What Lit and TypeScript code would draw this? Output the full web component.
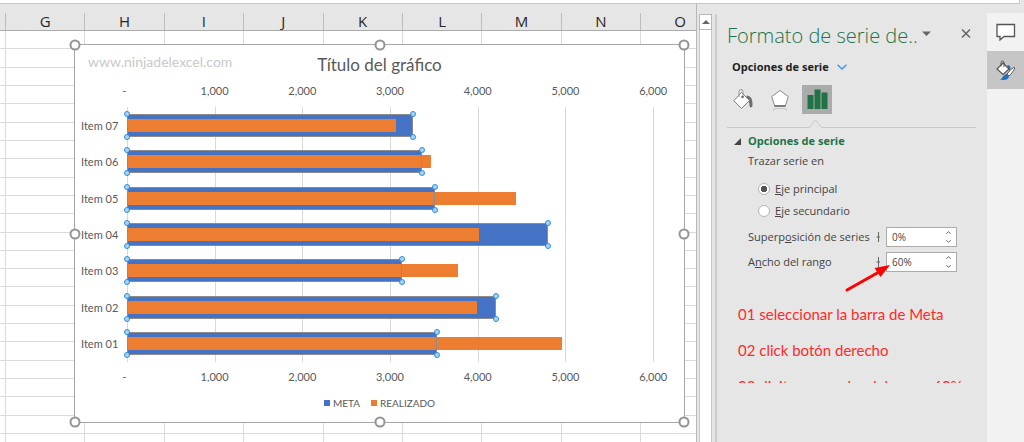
import { LitElement, html, css, svg } from "lit";
import { customElement, property } from "lit/decorators.js";

interface Row {
  label: string;
  meta: number;
  real: number;
}

const AXIS_MAX = 6000;
const TICKS = ["-", "1,000", "2,000", "3,000", "4,000", "5,000", "6,000"];
const ROWS: Row[] = [
  { label: "Item 07", meta: 3256, real: 3065 },
  { label: "Item 06", meta: 3355, real: 3458 },
  { label: "Item 05", meta: 3505, real: 4432 },
  { label: "Item 04", meta: 4797, real: 4005 },
  { label: "Item 03", meta: 3127, real: 3765 },
  { label: "Item 02", meta: 4199, real: 3982 },
  { label: "Item 01", meta: 3532, real: 4951 },
];
const COLUMNS = ["G", "H", "I", "J", "K", "L", "M", "N", "O"];
const pct = (v: number) => `width:${(v / AXIS_MAX) * 100}%`;

@customElement("bar-chart")
class BarChart extends LitElement {
  static styles = css`
    :host {
      display: flex;
      flex-direction: column;
      position: relative;
      box-sizing: border-box;
      background: #fff;
      border: 1px solid #a6a6a6;
      font-family: Lato, "Liberation Sans", sans-serif;
      font-size: 11px;
      color: #595959;
    }
    .head {
      display: grid;
      height: 36px;
    }
    .head > * {
      grid-area: 1 / 1;
      margin: 0;
      white-space: nowrap;
    }
    .mark {
      padding: 8px 0 0 13px;
      font-size: 14px;
      line-height: 18px;
      color: #c9c9c9;
    }
    .title {
      padding-top: 8px;
      text-align: center;
      font-weight: 400;
      font-size: 17px;
      line-height: 24px;
    }
    .axis {
      display: grid;
      grid-template-columns: repeat(7, 1fr);
      margin: 0 -13px 0 8px;
      text-align: center;
      line-height: 20px;
    }
    .axis span:first-child {
      padding-right: 5px;
    }
    .plot {
      flex: 1;
      display: grid;
      grid-template-columns: 52px 1fr;
      margin: 6px 30px 5px 0;
    }
    .labels,
    .bars {
      display: grid;
      grid-template-rows: repeat(7, 1fr);
    }
    .labels span {
      align-self: center;
      padding-left: 6px;
      white-space: nowrap;
    }
    .area,
    .cell {
      display: grid;
    }
    .area > *,
    .cell > * {
      grid-area: 1 / 1;
    }
    .lines {
      display: grid;
      grid-template-columns: repeat(6, 1fr);
      border-left: 1px solid #d9d9d9;
    }
    .lines i {
      border-right: 1px solid #d9d9d9;
    }
    .cell {
      align-items: center;
    }
    .meta,
    .outline {
      height: 23px;
      box-sizing: border-box;
    }
    .meta {
      background: #4472c4;
    }
    .real {
      height: 13px;
      background: #ed7d31;
    }
    .outline {
      position: relative;
      border: 1px solid #8c8c8c;
    }
    .dot {
      position: absolute;
      width: 4px;
      height: 4px;
      border: 1px solid #2f8fdc;
      border-radius: 50%;
      background: #a9d3f5;
    }
    .tl { left: -4px; top: -4px; }
    .tr { right: -4px; top: -4px; }
    .bl { left: -4px; bottom: -4px; }
    .br { right: -4px; bottom: -4px; }
    .legend {
      display: flex;
      justify-content: center;
      gap: 11px;
      padding: 8px 0 11px;
      font-size: 10px;
      line-height: 16px;
    }
    .key {
      display: flex;
      align-items: center;
      gap: 3px;
    }
    .key::before {
      content: "";
      width: 6px;
      height: 6px;
      background: #4472c4;
    }
    .key.orange::before {
      background: #ed7d31;
    }
    .grip {
      position: absolute;
      width: 7px;
      height: 7px;
      border: 2px solid #949494;
      border-radius: 50%;
      background: #fff;
      transform: translate(-50%, -50%);
    }
    .x0 { left: 0; }
    .x1 { left: 50%; }
    .x2 { left: 100%; }
    .y0 { top: 0; }
    .y1 { top: 50%; }
    .y2 { top: 100%; }
  `;

  render() {
    const axis = html`<div class="axis">${TICKS.map((t) => html`<span>${t}</span>`)}</div>`;
    return html`
      <div class="head">
        <span class="mark">www.ninjadelexcel.com</span>
        <h2 class="title">Título del gráfico</h2>
      </div>
      ${axis}
      <div class="plot">
        <div class="labels">${ROWS.map((r) => html`<span>${r.label}</span>`)}</div>
        <div class="area">
          <div class="lines">${TICKS.slice(1).map(() => html`<i></i>`)}</div>
          <div class="bars">
            ${ROWS.map(
              (r) => html`<div class="cell">
                <div class="meta" style=${pct(r.meta)}></div>
                <div class="real" style=${pct(r.real)}></div>
                <div class="outline" style=${pct(r.meta)}>
                  <i class="dot tl"></i><i class="dot tr"></i><i class="dot bl"></i><i class="dot br"></i>
                </div>
              </div>`
            )}
          </div>
        </div>
      </div>
      ${axis}
      <div class="legend">
        <span class="key">META</span><span class="key orange">REALIZADO</span>
      </div>
      ${["x0 y0", "x1 y0", "x2 y0", "x0 y1", "x2 y1", "x0 y2", "x1 y2", "x2 y2"].map(
        (c) => html`<i class="grip ${c}"></i>`
      )}
    `;
  }
}

@customElement("sheet-view")
class SheetView extends LitElement {
  static styles = css`
    :host {
      display: grid;
      grid-template-rows: 27px 1fr;
      min-width: 0;
      overflow: hidden;
      border-right: 1px solid #b8b8b8;
    }
    .cols {
      display: grid;
      grid-template-columns: 5px repeat(8, 1fr) 56px;
    }
    .header {
      background: #e6e6e6;
      border-bottom: 1px solid #ababab;
      padding-top: 9px;
      font: 15px/17px "Open Sans", "Noto Sans", sans-serif;
      color: #262626;
    }
    .header span {
      display: flex;
      justify-content: center;
      min-width: 78px;
      border-left: 1px solid #bdbdbd;
    }
    .body {
      display: grid;
    }
    .body > * {
      grid-area: 1 / 1;
    }
    .body .cols i {
      border-left: 1px solid #dadada;
    }
    .rows {
      display: grid;
      grid-template-rows: repeat(22, 1fr) 8px;
    }
    .rows i {
      border-bottom: 1px solid #dadada;
    }
    .rows i:last-child {
      border: 0;
    }
    .chart {
      margin: 13px 11px 19px 74px;
    }
  `;

  render() {
    return html`
      <div class="cols header"><b></b>${COLUMNS.map((c) => html`<span>${c}</span>`)}</div>
      <div class="body">
        <div class="cols"><b></b>${COLUMNS.map(() => html`<i></i>`)}</div>
        <div class="rows">${Array.from({ length: 23 }, () => html`<i></i>`)}</div>
        <bar-chart class="chart"></bar-chart>
      </div>
    `;
  }
}

@customElement("spin-field")
class SpinField extends LitElement {
  @property() before = "";
  @property() hot = "";
  @property() after = "";
  @property() value = "";

  static styles = css`
    :host {
      display: flex;
      align-items: center;
      height: 25px;
    }
    label {
      flex: 1;
      white-space: nowrap;
    }
    .tick {
      width: 4px;
      height: 10px;
      margin-right: 6px;
    }
    .box {
      display: flex;
      box-sizing: border-box;
      width: 71px;
      height: 20px;
      border: 1px solid #ababab;
      background: #fff;
    }
    input {
      flex: 1;
      min-width: 0;
      border: 0;
      padding: 0 0 0 5px;
      outline: 0;
      background: none;
      font: 10px/18px "Open Sans", "Noto Sans", sans-serif;
      color: #444;
    }
    .steps {
      display: grid;
      width: 16px;
    }
    button {
      display: grid;
      place-items: center;
      border: 0;
      padding: 0;
      background: none;
    }
    button svg {
      width: 5px;
      height: 3px;
    }
    path {
      fill: none;
      stroke: #666;
    }
  `;

  render() {
    return html`
      <label for="f">${this.before}<u>${this.hot}</u>${this.after}</label>
      <svg class="tick" viewBox="0 0 4 10"><path d="M2.5 0V10M0.5 5H4" /></svg>
      <div class="box">
        <input id="f" type="text" .value=${this.value} />
        <div class="steps">
          <button aria-label="Aumentar"><svg viewBox="0 0 5 3"><path d="M.3 2.7 2.5.7 4.7 2.7" /></svg></button>
          <button aria-label="Disminuir"><svg viewBox="0 0 5 3"><path d="M.3.3 2.5 2.3 4.7.3" /></svg></button>
        </div>
      </div>
    `;
  }
}

const bucketIcon = svg`
  <path d="M13.500 6.500c4 .3 6.500 3 6 10.500-.6 1.800-2.300 1.800-3 .2 .2-3-.6-5-3-6.700z" fill="#6e6e6e"/>
  <path d="M8.500 3.500 16.500 11.500 8.500 19.500.8 11.800z" fill="#fff" stroke="#808080"/>
  <path d="M6 8V2.500a2 2 0 0 1 4 0V8" fill="none" stroke="#9a9a9a"/>
  <circle cx="9.500" cy="8" r="1.300" fill="#6e6e6e"/>`;

@customElement("format-pane")
class FormatPane extends LitElement {
  static styles = css`
    :host {
      display: block;
      box-sizing: border-box;
      min-width: 0;
      padding: 14px 11px 0 10px;
      font: 11px/20px "Open Sans", "Noto Sans", sans-serif;
      color: #444;
    }
    button {
      border: 0;
      padding: 0;
      background: none;
      font: inherit;
      color: inherit;
    }
    .title {
      display: flex;
      height: 36px;
      align-items: center;
    }
    h1 {
      flex: 1;
      min-width: 0;
      margin: 0;
      font-size: 20px;
      line-height: 36px;
      font-weight: 300;
      white-space: nowrap;
      color: #217346;
    }
    .menu,
    .close {
      display: grid;
      height: 11px;
      margin-bottom: 5px;
    }
    .menu { width: 9px; margin-right: 30px; }
    .close { width: 10px; margin-right: 5px; }
    .options {
      display: flex;
      align-items: center;
      gap: 8px;
      height: 26px;
      padding-left: 5px;
      font-weight: 700;
      color: #222;
    }
    .tabs {
      display: flex;
      gap: 7px;
      padding: 5px 0 0 1px;
    }
    .tabs button {
      display: grid;
      place-items: center;
      width: 30px;
      height: 29px;
    }
    .tabs .on {
      background: #ababab;
    }
    .rule {
      display: flex;
      height: 9px;
      margin-top: 5px;
    }
    .rule::before,
    .rule::after {
      content: "";
      width: 82px;
      border-bottom: 1px solid #c8c8c8;
    }
    .rule::after {
      flex: 1;
    }
    .section {
      display: flex;
      align-items: center;
      gap: 7px;
      margin: 3px 0 0;
      padding-left: 7px;
      font-size: 11px;
      line-height: 20px;
      color: #217346;
    }
    .body {
      padding: 0 19px 0 21px;
    }
    fieldset {
      border: 0;
      margin: 0;
      padding: 0 0 2px;
    }
    legend {
      padding: 0 0 7px;
    }
    .radio {
      display: flex;
      align-items: center;
      gap: 5px;
      height: 22px;
      padding-left: 10px;
    }
    .radio input {
      appearance: none;
      box-sizing: border-box;
      width: 12px;
      height: 12px;
      margin: 0;
      border: 1px solid #b4b4b4;
      border-radius: 50%;
      background: #fff;
    }
    .radio input:checked {
      background: radial-gradient(circle, #555 0 3px, #fff 3px);
    }
    .fields {
      position: relative;
    }
    .arrow {
      position: absolute;
      left: 95px;
      top: 36px;
      width: 50px;
      height: 34px;
    }
    .notes {
      height: 87px;
      margin-top: 22px;
      padding-left: 11px;
      overflow: hidden;
      font: 15px/36px Lato, "Liberation Sans", sans-serif;
      color: #ff2a2a;
      white-space: nowrap;
    }
    .notes p {
      margin: 0;
    }
  `;

  render() {
    return html`
      <div class="title">
        <h1>Formato de serie de..</h1>
        <button class="menu" aria-label="Opciones del panel">
          <svg width="9" height="11"><path d="M0 3.500H9L4.500 8z" fill="#666" /></svg>
        </button>
        <button class="close" aria-label="Cerrar">
          <svg width="10" height="11"><path d="M1 1.500 9 9.500M9 1.500 1 9.500" stroke="#666" stroke-width="1.500" /></svg>
        </button>
      </div>
      <button class="options">
        Opciones de serie
        <svg width="10" height="6"><path d="M.6.800 5 5 9.400.800" fill="none" stroke="#3a96dd" stroke-width="1.300" /></svg>
      </button>
      <div class="tabs">
        <button aria-label="Relleno y línea"><svg width="21" height="21">${bucketIcon}</svg></button>
        <button aria-label="Efectos">
          <svg width="20" height="22">
            <path d="M10 1.500 18.300 7.500 15.300 17H4.700L1.700 7.500z" fill="#fff" stroke="#8a8a8a" />
            <path d="M4.500 17H15.500" stroke="#666" stroke-width="1.500" />
            <path d="M4.500 19 3.500 22M15.500 19 16.500 22M5 19.500H15" stroke="#c4c4c4" fill="none" />
          </svg>
        </button>
        <button class="on" aria-label="Opciones de serie">
          <svg width="21" height="21"><path d="M.500 6H6.500V20H.500zM7.500 .500H13.500V20H7.500zM14.500 3.500H20.500V20H14.500z" fill="#217346" /></svg>
        </button>
      </div>
      <div class="rule">
        <svg width="13" height="9"><path d="M0 8.500H.500L6.500 1 12.500 8.500H13" fill="none" stroke="#c8c8c8" /></svg>
      </div>
      <h2 class="section">
        <svg width="7" height="7"><path d="M7 0V7H0z" fill="#444" /></svg>Opciones de serie
      </h2>
      <div class="body">
        <fieldset>
          <legend>Trazar serie en</legend>
          <label class="radio"><input type="radio" name="eje" checked /><span><u>E</u>je principal</span></label>
          <label class="radio"><input type="radio" name="eje" /><span><u>E</u>je secundario</span></label>
        </fieldset>
        <div class="fields">
          <spin-field before="Superp" hot="o" after="sición de series" value="0%"></spin-field>
          <spin-field before="A" hot="n" after="cho del rango" value="60%"></spin-field>
          <svg class="arrow" viewBox="0 0 50 34">
            <path d="M4 30 36 12" stroke="#f00" stroke-width="3" stroke-linecap="round" />
            <path d="M47 5 37.500 17 31.500 8z" fill="#f00" />
          </svg>
        </div>
      </div>
      <div class="notes">
        <p>01 seleccionar la barra de Meta</p>
        <p>02 click botón derecho</p>
        <p>03 digitar en ancho del rango 60%</p>
      </div>
    `;
  }
}

@customElement("app-root")
class AppRoot extends LitElement {
  static styles = css`
    :host {
      display: grid;
      grid-template-rows: 4px 1fr;
      min-height: 100vh;
      background: #e6e6e6;
    }
    .ribbon {
      box-sizing: border-box;
      margin-right: 4px;
      background: #fdfdfd;
      border: solid #c8c8c8;
      border-width: 0 1px 1px 0;
    }
    .main {
      display: grid;
      grid-template-columns: 1fr 20px 270px 37px;
    }
    .sheet {
      background: #fff;
    }
    .scroll {
      display: flex;
      flex-direction: column;
      box-sizing: border-box;
      margin: 10px 0 0;
      border: solid #cdcdcd;
      border-width: 0 2px 0 0;
      padding: 0 3px 0 2px;
    }
    .up {
      display: grid;
      place-items: center;
      height: 16px;
      padding: 0;
      border: 1px solid #b8b8b8;
      background: #fff;
    }
    .track {
      flex: 1;
      border: solid #c8c8c8;
      border-width: 0 1px;
      background: #fff;
    }
    .rail {
      display: flex;
      flex-direction: column;
      margin-top: 9px;
      background: #f2f2f2;
    }
    .rail button {
      display: grid;
      place-items: center;
      height: 38px;
      padding: 0;
      border: 0;
      background: none;
    }
    .rail .on {
      background: #c6c6c6;
    }
  `;

  render() {
    return html`
      <div class="ribbon"></div>
      <div class="main">
        <sheet-view class="sheet"></sheet-view>
        <div class="scroll">
          <button class="up" aria-label="Desplazar arriba">
            <svg width="8" height="4"><path d="M0 4 4 0 8 4z" fill="#666" /></svg>
          </button>
          <div class="track"></div>
        </div>
        <format-pane></format-pane>
        <nav class="rail">
          <button aria-label="Comentarios">
            <svg width="20" height="18">
              <path d="M1 1.500H18.500V13.500H8L4 17V13.500H1z" fill="#fff" stroke="#555" stroke-width="1.300" />
            </svg>
          </button>
          <button class="on" aria-label="Formato">
            <svg width="20" height="21">
              <path d="M11.500 5C14.500 5 15 8 14 11L11.500 8z" fill="#1e70bf" />
              <path d="M7 3 13 9 7 14.500 1 9z" fill="#fff" stroke="#555" stroke-width="1.200" />
              <path d="M5 6.500V2.500a1.500 1.500 0 0 1 3 0V7" fill="none" stroke="#555" />
              <path d="M18.500 7.500C19.500 8.500 15 14.500 13 16L11 14C12.500 12 17.500 6.500 18.500 7.500z" fill="#fff" stroke="#555" />
              <path d="M10.500 14 13 16.500C12.500 20 8 20.500 4 19.500 7 18.500 7 14.500 10.500 14z" fill="#1e70bf" />
            </svg>
          </button>
        </nav>
      </div>
    `;
  }
}
